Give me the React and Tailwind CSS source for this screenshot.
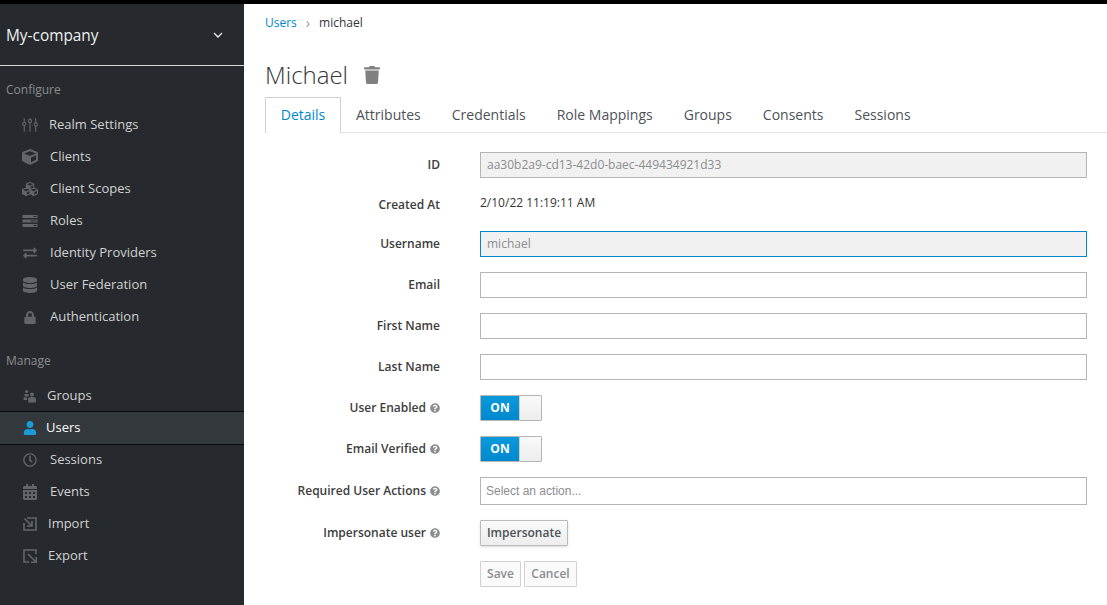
import React from 'react';
import {
  FaCube,
  FaCubes,
  FaExchangeAlt,
  FaDatabase,
  FaLock,
  FaUser,
  FaRegClock,
  FaCalendarAlt,
  FaTrash,
  FaQuestionCircle,
} from 'react-icons/fa';

const SlidersIcon = ({ className }) => (
  <svg viewBox="0 0 14 14" className={className} fill="none" stroke="currentColor">
    <path d="M2 1v12M7 1v12M12 1v12" strokeWidth="1" />
    <circle cx="2" cy="6" r="1.4" strokeWidth="1" fill="#262a2e" />
    <circle cx="7" cy="3.5" r="1.4" strokeWidth="1" fill="#262a2e" />
    <circle cx="12" cy="6.5" r="1.4" strokeWidth="1" fill="#262a2e" />
  </svg>
);

const ServerIcon = ({ className }) => (
  <svg viewBox="0 0 15 12" className={className} fill="currentColor">
    <path d="M0 0h15v3H0zM0 4.5h15v3H0zM0 9h15v3H0z" />
    <path d="M11 1h3v1h-3zM8 5.5h6v1H8zM11 10h3v1h-3z" fill="#262a2e" />
  </svg>
);

const GroupsIcon = ({ className }) => (
  <svg viewBox="0 0 14 14" className={className} fill="currentColor">
    <circle cx="3.6" cy="2.6" r="1.5" />
    <path d="M1.6 5h4v2.4H1.6z" />
    <circle cx="9" cy="5.4" r="2" />
    <path d="M5.2 13.5V10.4C5.2 8.8 6.4 8 7.6 8h2.8c1.3 0 2.5.8 2.5 2.4v3.1z" />
    <path d="M.6 8.4h3.6v2.6H.6z" />
  </svg>
);

const ImportIcon = ({ className }) => (
  <svg viewBox="0 0 14 14" className={className} fill="none" stroke="currentColor" strokeWidth="1.6">
    <path d="M4 1h9v12H1V6" />
    <path d="M1.5 1.5 8.5 8.5M9 4v5H4" />
  </svg>
);

const ExportIcon = ({ className }) => (
  <svg viewBox="0 0 14 14" className={className} fill="none" stroke="currentColor" strokeWidth="1.6">
    <path d="M13 5V1H1v12h5" />
    <path d="M5 5l8 8M13.2 8v5.2H8" />
  </svg>
);

const configureItems = [
  { label: 'Realm Settings', icon: SlidersIcon, gap: 'gap-[11px]', size: 'w-4 h-4' },
  { label: 'Clients', icon: FaCube, gap: 'gap-[12px]', size: 'w-4 h-4' },
  { label: 'Client Scopes', icon: FaCubes, gap: 'gap-[12px]', size: 'w-4 h-4' },
  { label: 'Roles', icon: ServerIcon, gap: 'gap-[12px]', size: 'w-4 h-3' },
  { label: 'Identity Providers', icon: FaExchangeAlt, gap: 'gap-[12px]', size: 'w-4 h-3.5' },
  { label: 'User Federation', icon: FaDatabase, gap: 'gap-[12px]', size: 'w-4 h-4' },
  { label: 'Authentication', icon: FaLock, gap: 'gap-[12px]', size: 'w-4 h-[13px]' },
];

const manageItems = [
  { label: 'Groups', icon: GroupsIcon, gap: 'gap-[9px]', size: 'w-4 h-3.5' },
  { label: 'Users', icon: FaUser, gap: 'gap-[8px]', size: 'w-4 h-3.5', active: true },
  { label: 'Sessions', icon: FaRegClock, gap: 'gap-[12px]', size: 'w-4 h-3.5' },
  { label: 'Events', icon: FaCalendarAlt, gap: 'gap-[12px]', size: 'w-4 h-4' },
  { label: 'Import', icon: ImportIcon, gap: 'gap-[10px]', size: 'w-4 h-3.5' },
  { label: 'Export', icon: ExportIcon, gap: 'gap-[10px]', size: 'w-4 h-3.5' },
];

const tabs = ['Attributes', 'Credentials', 'Role Mappings', 'Groups', 'Consents', 'Sessions'];

const NavItem = ({ item }) => {
  const Icon = item.icon;
  if (item.active) {
    return (
      <div className={`h-8 -my-px box-content flex items-center pl-[22px] ${item.gap} bg-[#33383c] border-y border-[#0b0d0e] text-white relative`}>
        <Icon className={`${item.size} shrink-0 text-[#1b9ad6]`} />
        <span>{item.label}</span>
      </div>
    );
  }
  return (
    <div className={`h-8 flex items-center pl-[22px] ${item.gap} text-[#d1d1d1]`}>
      <Icon className={`${item.size} shrink-0 text-[#62666a]`} />
      <span>{item.label}</span>
    </div>
  );
};

const Help = () => <FaQuestionCircle className="inline-block ml-1 w-[10px] h-[10px] text-[#8b8d8f] align-[-1px]" />;

const Row = ({ label, help, children, className = 'mb-[15px]' }) => (
  <div className={`flex items-center ${className}`}>
    <div className="w-[175px] text-right text-xs font-semibold text-[#3d3d3d] shrink-0">
      {label}
      {help && <Help />}
    </div>
    <div className="ml-10">{children}</div>
  </div>
);

const Input = ({ value, active, disabled }) => (
  <div
    className={`w-[607px] h-[26px] px-[6px] flex items-center text-xs text-[#8b8d8f] border ${
      active ? 'border-[#0088ce]' : 'border-[#b5b5b5]'
    } ${disabled ? 'bg-[#f1f1f1]' : 'bg-white'}`}
  >
    {value}
  </div>
);

const Toggle = () => (
  <div className="w-[62px] h-[26px] flex border border-[#b5b5b5] rounded-[1px] overflow-hidden">
    <div className="w-[38px] bg-gradient-to-b from-[#0a9ada] to-[#0088ce] text-white text-xs font-bold flex items-center justify-center">
      ON
    </div>
    <div className="flex-1 border-l border-[#cfcfcf] bg-gradient-to-b from-[#fafafa] to-[#ededed]" />
  </div>
);

export default function App() {
  return (
    <div className="w-[1107px] h-[605px] overflow-hidden bg-white flex flex-col font-['Open_Sans',sans-serif]">
      <div className="h-1 bg-black shrink-0" />
      <div className="flex flex-1 min-h-0">
        {/* Sidebar */}
        <aside className="w-[244px] shrink-0 bg-[#262a2e] text-[13px]">
          <div className="h-[62px] border-b border-[#d8d8d8] pl-[6px] pr-[21px] flex items-center justify-between text-[#f0f0f0]">
            <span className="text-[15.4px] mt-[2px]">My-company</span>
            <svg viewBox="0 0 10 6" className="w-[10px] h-[6px]" fill="none" stroke="currentColor" strokeWidth="1.3">
              <path d="M1 1l4 4 4-4" />
            </svg>
          </div>
          <div className="pl-[6px] mt-[15px] h-[18px] flex items-center text-xs text-[#8b8d8f]">Configure</div>
          <div className="mt-[10px]">
            {configureItems.map((item) => (
              <NavItem key={item.label} item={item} />
            ))}
          </div>
          <div className="pl-[6px] mt-[19px] h-[18px] flex items-center text-xs text-[#8b8d8f]">Manage</div>
          <div className="mt-[10px]">
            {manageItems.map((item) => (
              <NavItem key={item.label} item={item} />
            ))}
          </div>
        </aside>

        {/* Main content */}
        <main className="flex-1 min-w-0 pl-[21px]">
          <div className="mt-[10px] h-[18px] flex items-center text-xs text-[#363636]">
            <span className="text-[#0088ce]">Users</span>
            <span className="ml-[9px] mr-[9px] text-[#9c9c9c] text-sm leading-none">›</span>
            <span>michael</span>
          </div>
          <div className="mt-[25px] h-[36px] flex items-center text-[#363636]">
            <h1 className="text-2xl font-light">Michael</h1>
            <FaTrash className="ml-4 w-[16px] h-[18px] text-[#808080]" />
          </div>
          <div className="mt-[5px] h-[35px] flex border-b border-[#e5e5e5] text-sm text-[#4d5258]">
            <div className="w-[76px] h-[36px] -mt-px pb-px bg-white border border-b-0 border-[#d1d1d1] text-[#0088ce] flex items-center justify-center">
              Details
            </div>
            <div className="flex ml-[15px] gap-[31px] h-[34px] items-center">
              {tabs.map((tab) => (
                <span key={tab}>{tab}</span>
              ))}
            </div>
          </div>

          <div className="mt-[19px]">
            <Row label="ID">
              <Input value="aa30b2a9-cd13-42d0-baec-449434921d33" disabled />
            </Row>
            <Row label="Created At">
              <div className="h-[23px] text-xs text-[#363636] flex items-center -translate-y-[2px]">2/10/22 11:19:11 AM</div>
            </Row>
            <Row label="Username">
              <Input value="michael" disabled active />
            </Row>
            <Row label="Email">
              <Input />
            </Row>
            <Row label="First Name">
              <Input />
            </Row>
            <Row label="Last Name">
              <Input />
            </Row>
            <Row label="User Enabled" help>
              <Toggle />
            </Row>
            <Row label="Email Verified" help>
              <Toggle />
            </Row>
            <Row label="Required User Actions" help className="mb-[15px]">
              <div className="w-[607px] h-[28px] -mb-px px-[5px] flex items-center border border-[#b5b5b5] bg-white text-xs text-[#8b8d8f] font-['Liberation_Sans',sans-serif]">
                Select an action...
              </div>
            </Row>
            <Row label="Impersonate user" help>
              <button className="w-[88px] h-[26px] text-xs font-semibold text-[#4d5258] border border-[#bbb] rounded-[1px] bg-gradient-to-b from-[#fafafa] to-[#ededed] shadow-[0_1px_2px_rgba(0,0,0,0.15)]">
                Impersonate
              </button>
            </Row>
            <Row label="">
              <div className="flex gap-[3px] text-xs font-semibold text-[#8b8d8f]">
                <button className="w-[41px] h-[26px] border border-[#d1d1d1] rounded-[1px] bg-[#fafafa]">Save</button>
                <button className="w-[53px] h-[26px] border border-[#d1d1d1] rounded-[1px] bg-[#fafafa]">Cancel</button>
              </div>
            </Row>
          </div>
        </main>
      </div>
    </div>
  );
}
